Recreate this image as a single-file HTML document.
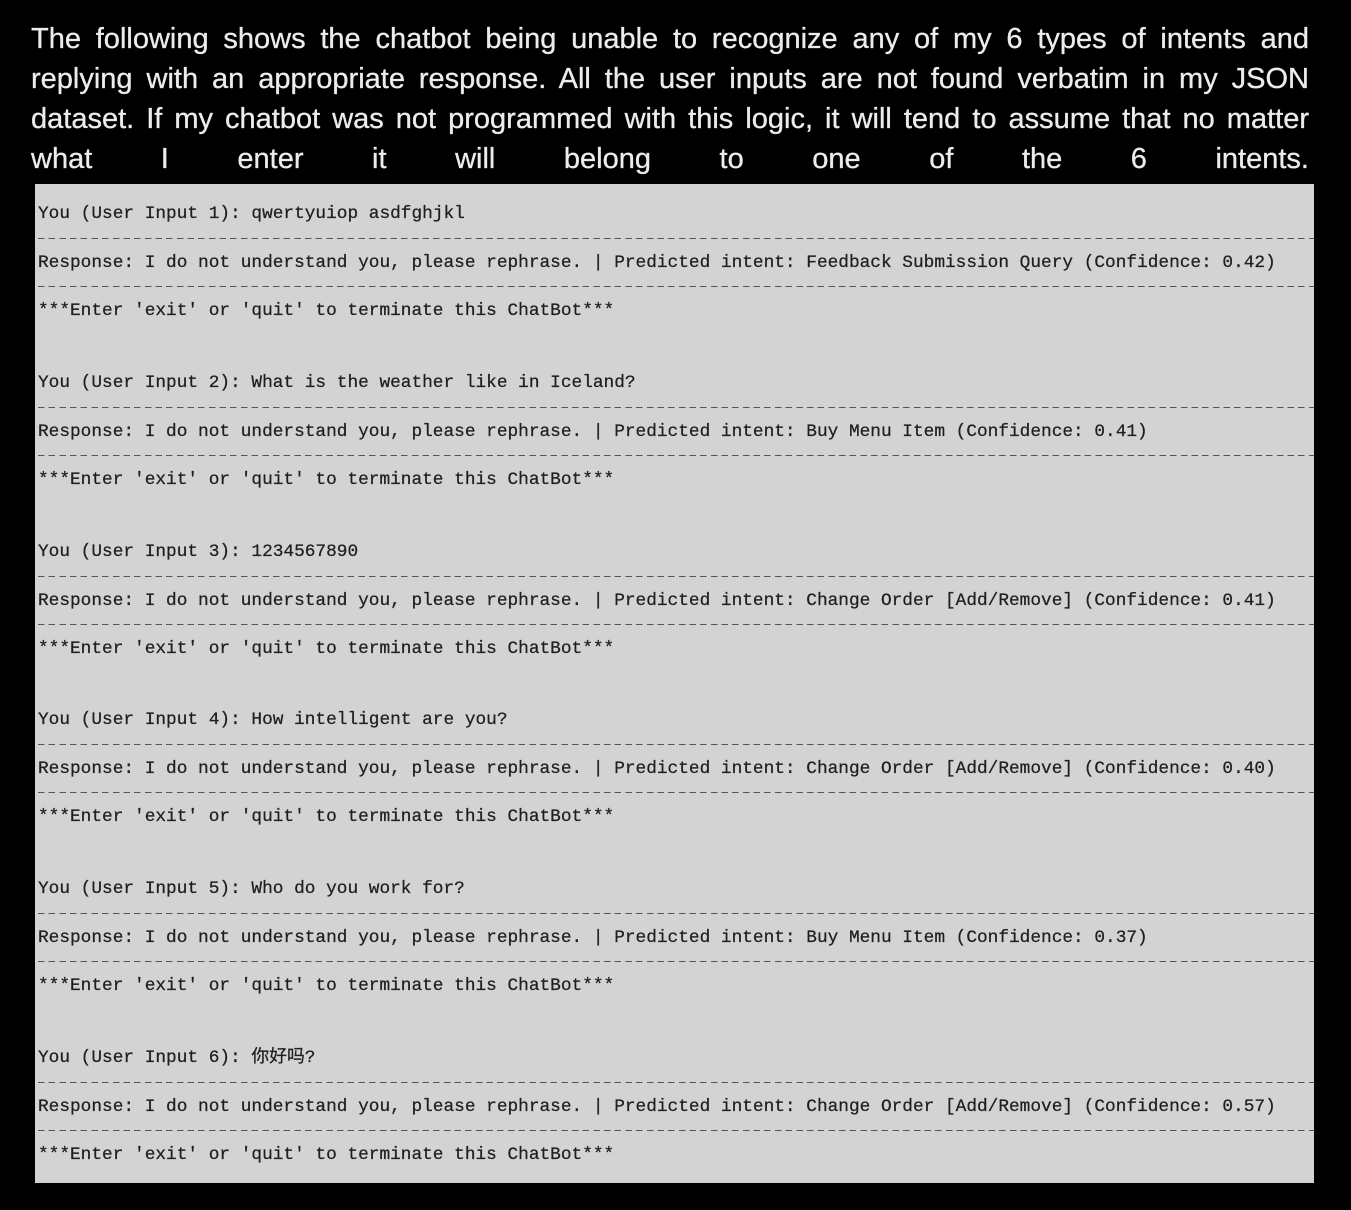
<!DOCTYPE html>
<html><head><meta charset="utf-8"><style>
body{margin:0;background:#000;width:1351px;height:1210px;overflow:hidden;position:relative}
.h{position:absolute;left:31px;width:1278px;font:29px "Liberation Sans",Arial,sans-serif;color:#ececec;text-align:justify;text-align-last:justify;white-space:nowrap;line-height:40px;-webkit-text-stroke:0.3px #ececec}
.p{position:absolute;left:35px;top:184px;width:1279px;height:999px;background:#d3d3d3}
.t{position:absolute;left:3px;font:17.8px "Liberation Mono","Noto Sans CJK SC",monospace;color:#1f1f1f;white-space:pre;line-height:22px;-webkit-text-stroke:0.25px #1f1f1f}
.d{position:absolute;left:3px;right:0;height:1px;background:repeating-linear-gradient(90deg,#555 0 6.5px,transparent 6.5px 10.68px)}
</style></head><body>
<div class="h" style="top:19px">The following shows the chatbot being unable to recognize any of my 6 types of intents and</div>
<div class="h" style="top:59px">replying with an appropriate response. All the user inputs are not found verbatim in my JSON</div>
<div class="h" style="top:99px">dataset. If my chatbot was not programmed with this logic, it will tend to assume that no matter</div>
<div class="h" style="top:139px">what I enter it will belong to one of the 6 intents.</div>
<div class="p">
<script>
const blocks=[
["qwertyuiop asdfghjkl","Feedback Submission Query (Confidence: 0.42)"],
["What is the weather like in Iceland?","Buy Menu Item (Confidence: 0.41)"],
["1234567890","Change Order [Add/Remove] (Confidence: 0.41)"],
["How intelligent are you?","Change Order [Add/Remove] (Confidence: 0.40)"],
["Who do you work for?","Buy Menu Item (Confidence: 0.37)"],
["你好吗?","Change Order [Add/Remove] (Confidence: 0.57)"]];
let h="";
blocks.forEach((b,i)=>{const o=i*168.8;
h+=`<div class="t" style="top:${19+o}px">You (User Input ${i+1}): ${b[0]}</div>`;
h+=`<div class="d" style="top:${54+o}px"></div>`;
h+=`<div class="t" style="top:${68+o}px">Response: I do not understand you, please rephrase. | Predicted intent: ${b[1]}</div>`;
h+=`<div class="d" style="top:${102+o}px"></div>`;
h+=`<div class="t" style="top:${116+o}px">***Enter 'exit' or 'quit' to terminate this ChatBot***</div>`;});
document.write(h);
</script>
</div>
</body></html>
